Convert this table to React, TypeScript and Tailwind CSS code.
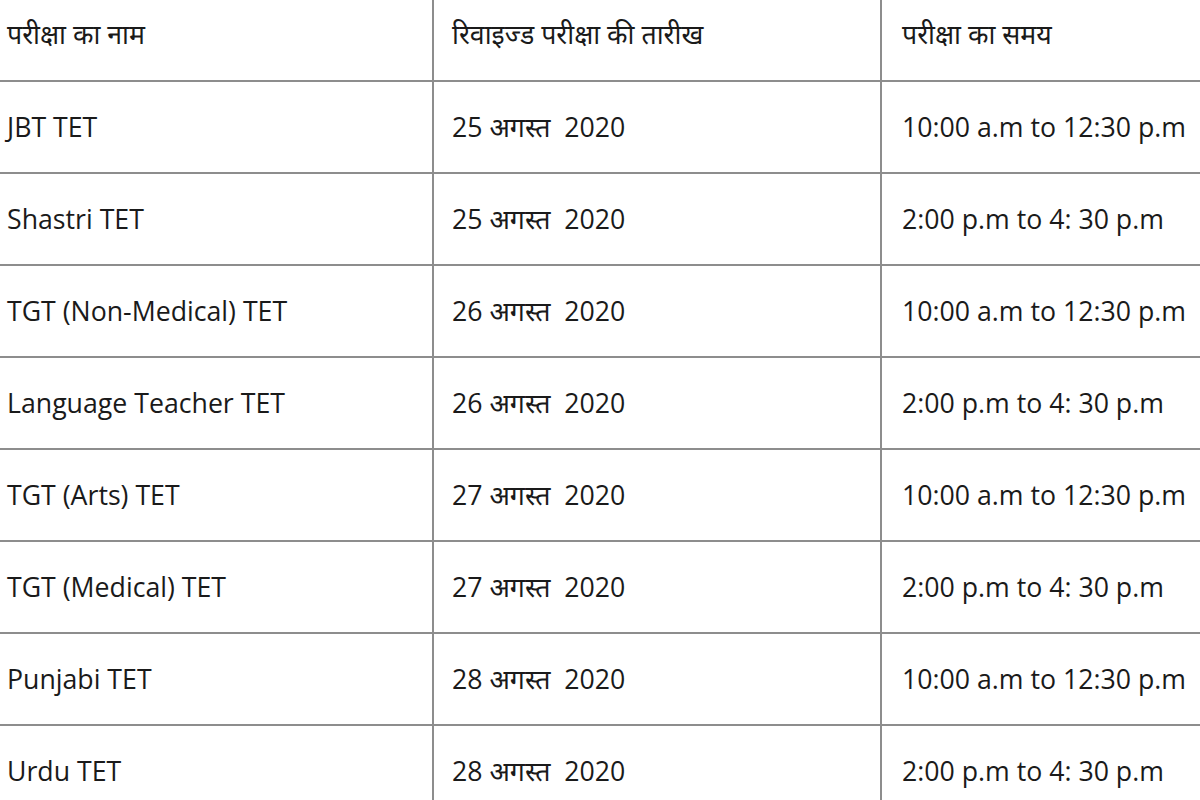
const rows: [string, string, string][] = [
  ["JBT TET", "25", "10:00 a.m to 12:30 p.m"],
  ["Shastri TET", "25", "2:00 p.m to 4: 30 p.m"],
  ["TGT (Non-Medical) TET", "26", "10:00 a.m to 12:30 p.m"],
  ["Language Teacher TET", "26", "2:00 p.m to 4: 30 p.m"],
  ["TGT (Arts) TET", "27", "10:00 a.m to 12:30 p.m"],
  ["TGT (Medical) TET", "27", "2:00 p.m to 4: 30 p.m"],
  ["Punjabi TET", "28", "10:00 a.m to 12:30 p.m"],
  ["Urdu TET", "28", "2:00 p.m to 4: 30 p.m"],
];

export default function App() {
  return (
    <div className="h-[800px] w-[1200px] overflow-hidden bg-white text-[#1a1a1a] [font-family:'Open_Sans','Noto_Sans','Noto_Sans_Devanagari',sans-serif]">
      <table className="w-[1213px] -mt-[11px] -ml-[13px] border-collapse text-[26.7px] leading-none">
        <thead>
          <tr className="h-[92px]">
            <th className="w-[446px] border-2 border-[#8d8d8d] border-t-0 border-l-0 pl-5 text-left font-normal">परीक्षा का नाम</th>
            <th className="w-[448px] border-2 border-[#8d8d8d] border-t-0 pl-[18px] text-left font-normal">रिवाइज्ड परीक्षा की तारीख</th>
            <th className="border-2 border-[#8d8d8d] border-t-0 border-r-0 pl-5 text-left font-normal">परीक्षा का समय</th>
          </tr>
        </thead>
        <tbody>
          {rows.map(([name, day, time]) => (
            <tr key={name} className="h-[92px]">
              <td className="border-2 border-[#8d8d8d] border-l-0 pl-5">{name}</td>
              <td className="border-2 border-[#8d8d8d] pl-[18px]">{day} अगस्त&nbsp; 2020</td>
              <td className="border-2 border-[#8d8d8d] border-r-0 pl-5">{time}</td>
            </tr>
          ))}
        </tbody>
      </table>
    </div>
  );
}
